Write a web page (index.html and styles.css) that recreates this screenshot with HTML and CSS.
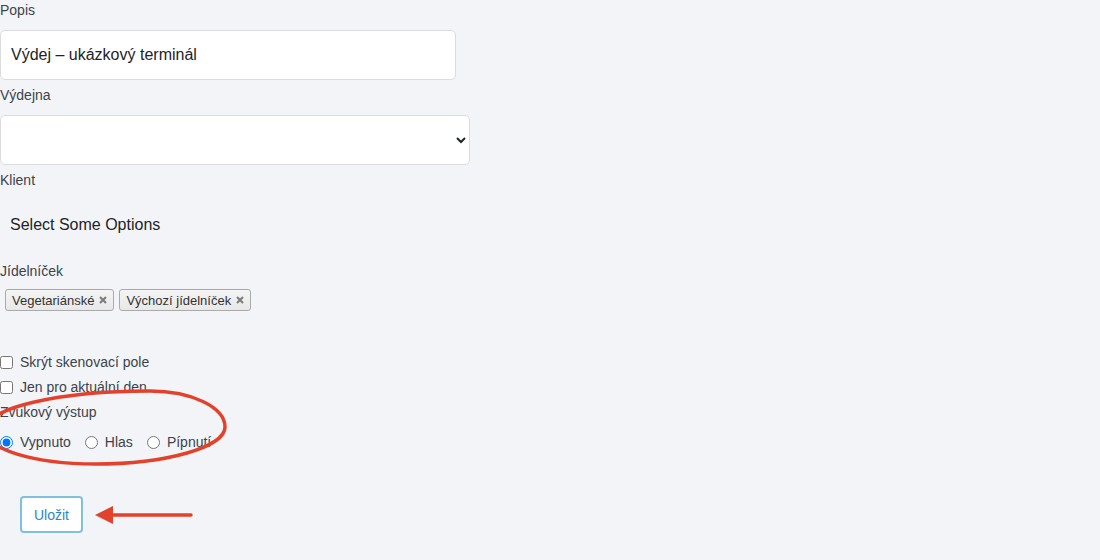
FILE: index.html
```html
<!DOCTYPE html>
<html lang="cs">
<head>
<meta charset="utf-8">
<title>Terminál</title>
<link rel="stylesheet" href="styles.css">
</head>
<body>
<div class="page">
  <form class="form">
    <label class="field-label">Popis</label>
    <input class="text-input" type="text" value="Výdej – ukázkový terminál">

    <label class="field-label gap-sm">Výdejna</label>
    <select class="select-input"><option></option></select>

    <label class="field-label gap-sm">Klient</label>
    <div class="chosen-single"><span>Select Some Options</span></div>

    <label class="field-label gap-md">Jídelníček</label>
    <ul class="chosen-choices">
      <li class="choice">Vegetariánské<svg class="choice-x" width="8" height="8" viewBox="0 0 8 8"><path d="M1 1L7 7M7 1L1 7" stroke="#7a7a7a" stroke-width="2"/></svg></li>
      <li class="choice">Výchozí jídelníček<svg class="choice-x" width="8" height="8" viewBox="0 0 8 8"><path d="M1 1L7 7M7 1L1 7" stroke="#7a7a7a" stroke-width="2"/></svg></li>
    </ul>

    <label class="check-row first-check"><input type="checkbox" class="check"><span>Skrýt skenovací pole</span></label>
    <label class="check-row gap-sm"><input type="checkbox" class="check"><span>Jen pro aktuální den</span></label>

    <div class="field-label gap-sm">Zvukový výstup</div>
    <div class="radio-group">
      <label class="radio-item"><input type="radio" name="zvuk" class="radio" checked><span>Vypnuto</span></label>
      <label class="radio-item"><input type="radio" name="zvuk" class="radio"><span>Hlas</span></label>
      <label class="radio-item"><input type="radio" name="zvuk" class="radio"><span>Pípnutí</span></label>
    </div>

    <div class="actions">
      <button type="button" class="save-btn">Uložit</button>
    </div>
  </form>

  <svg class="annotations" width="1100" height="560" viewBox="0 0 1100 560">
    <path d="M225 427 C225 407 191 391 150 391 C59 391 -15 408 -15 430 C-15 449 34 464 95 464 C167 464 225 447 225 427 Z" fill="none" stroke="#e4412d" stroke-width="3.5"/>
    <line x1="110" y1="515" x2="191" y2="515" stroke="#e4412d" stroke-width="3.5" stroke-linecap="round"/>
    <polygon points="95,515 113,506 113,524" fill="#e4412d"/>
  </svg>
</div>
</body>
</html>
```

FILE: styles.css
```css
html, body {
  margin: 0;
  padding: 0;
  background: #f3f4f8;
}

body {
  font-family: "Liberation Sans", Arial, sans-serif;
  font-size: 14px;
  color: #3c434a;
  width: 1100px;
  height: 560px;
  overflow: hidden;
}

.page {
  position: relative;
  width: 1100px;
  height: 560px;
}

.form {
  display: flex;
  flex-direction: column;
  align-items: flex-start;
  margin: 0;
}

.field-label {
  display: block;
  line-height: 20px;
  font-size: 14px;
  color: #3c434a;
}

.gap-sm { margin-top: 5px; }
.gap-md { margin-top: 12px; }

.text-input {
  box-sizing: border-box;
  width: 456px;
  height: 50px;
  margin: 10px 0 0 0;
  padding: 0 10px;
  border: 1px solid #dcdcde;
  border-radius: 5px;
  background: #fff;
  font-family: "Liberation Sans", Arial, sans-serif;
  font-size: 16px;
  color: #1d2327;
  outline: none;
}

.select-input {
  box-sizing: border-box;
  width: 470px;
  height: 50px;
  margin: 10px 0 0 0;
  border: 1px solid #dcdcde;
  border-radius: 5px;
  background: #fff;
  font-family: "Liberation Sans", Arial, sans-serif;
  font-size: 16px;
  color: #1d2327;
}

.chosen-single {
  box-sizing: border-box;
  height: 48px;
  margin-top: 11px;
  padding-left: 10px;
  display: flex;
  align-items: center;
  font-size: 16px;
  color: #1d2327;
}

.chosen-choices {
  list-style: none;
  margin: 8px 0 0 5px;
  padding: 0;
  display: flex;
  gap: 5px;
}

.choice {
  box-sizing: border-box;
  height: 22px;
  display: flex;
  align-items: center;
  gap: 5px;
  padding: 0 6px 0 6px;
  border: 1px solid #aaa;
  border-radius: 3px;
  background: linear-gradient(#f4f4f4, #e8e8e8);
  font-size: 13px;
  color: #333;
}

.choice-x {
  display: block;
}

.check-row {
  display: flex;
  align-items: center;
  line-height: 20px;
  font-size: 14px;
  color: #3c434a;
}

.first-check { margin-top: 41px; }

.check {
  width: 13px;
  height: 13px;
  margin: 0 7px 0 0;
}

.radio-group {
  display: flex;
  gap: 14px;
  margin-top: 10px;
  line-height: 20px;
}

.radio-item {
  display: flex;
  align-items: center;
  color: #3c434a;
}

.radio {
  width: 13px;
  height: 13px;
  margin: 0 7px 0 0;
}

.actions {
  margin: 44px 0 0 20px;
}

.save-btn {
  box-sizing: border-box;
  width: 63px;
  height: 37px;
  padding: 0;
  border: 2px solid #7fc0e0;
  border-radius: 4px;
  background: #fff;
  font-family: "Liberation Sans", Arial, sans-serif;
  font-size: 14px;
  color: #2b87c3;
}

.annotations {
  position: absolute;
  left: 0;
  top: 0;
  pointer-events: none;
}
```
